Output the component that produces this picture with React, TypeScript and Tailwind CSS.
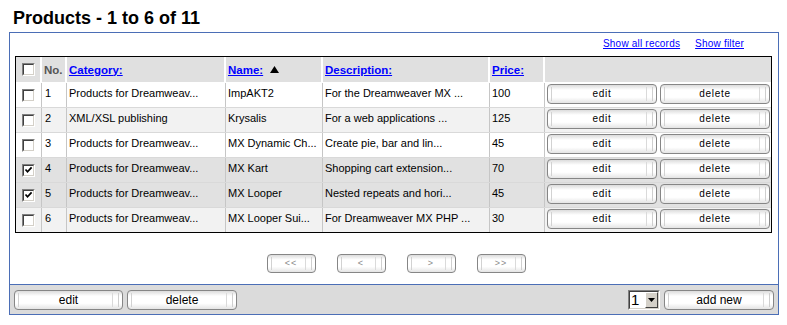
import React from 'react';

type Row = { no: number; cat: string; name: string; desc: string; price: string; checked: boolean };

const rows: Row[] = [
  { no: 1, cat: 'Products for Dreamweav...', name: 'ImpAKT2', desc: 'For the Dreamweaver MX ...', price: '100', checked: false },
  { no: 2, cat: 'XML/XSL publishing', name: 'Krysalis', desc: 'For a web applications ...', price: '125', checked: false },
  { no: 3, cat: 'Products for Dreamweav...', name: 'MX Dynamic Ch...', desc: 'Create pie, bar and lin...', price: '45', checked: false },
  { no: 4, cat: 'Products for Dreamweav...', name: 'MX Kart', desc: 'Shopping cart extension...', price: '70', checked: true },
  { no: 5, cat: 'Products for Dreamweav...', name: 'MX Looper', desc: 'Nested repeats and hori...', price: '45', checked: true },
  { no: 6, cat: 'Products for Dreamweav...', name: 'MX Looper Sui...', desc: 'For Dreamweaver MX PHP ...', price: '30', checked: false },
];

const cols = 'grid grid-cols-[26px_25px_159px_97px_167px_55px_226px]';

// aqua-ish pill button used everywhere on the page
const Btn: React.FC<{ className?: string; children: React.ReactNode }> = ({ className = '', children }) => (
  <button
    className={`relative flex items-center justify-center rounded-[4px] border border-[#868686] bg-[linear-gradient(#dcdcdc,#ffffff_28%,#ffffff_68%,#e4e4e4)] ${className}`}
  >
    <span className="absolute left-[3px] top-[2px] bottom-[2px] w-px bg-[#d2d2d2]" />
    <span className="absolute right-[9px] top-[2px] bottom-[2px] w-px bg-[#dadada]" />
    <span className="absolute right-[3px] top-[2px] bottom-[2px] w-px bg-[#cfcfcf]" />
    <span className="relative">{children}</span>
  </button>
);

const Check: React.FC<{ on?: boolean }> = ({ on }) => (
  <span className="block h-[13px] w-[13px] border border-t-[#808080] border-l-[#808080] border-r-white border-b-white">
    <span className="relative block h-full w-full border border-t-[#404040] border-l-[#404040] border-r-[#d4d0c8] border-b-[#d4d0c8] bg-white">
      {on && (
        <svg className="absolute left-0 top-0" width="9" height="9" viewBox="0 0 9 9">
          <path d="M1.5 3.5 L3.5 5.8 L7.6 1.4" stroke="#000" strokeWidth="1.7" fill="none" />
        </svg>
      )}
    </span>
  </span>
);

export default function App() {
  return (
    <div className="h-[325px] w-[787px] overflow-hidden bg-white font-['Liberation_Sans',Arial,sans-serif] text-black">
      <div className="h-[32px] pl-[13px] pt-[9px] text-[18px] font-bold leading-[18px]">Products - 1 to 6 of 11</div>

      <div className="ml-[9px] w-[770px] border border-[#4b6eb6]">
        <div className="h-[252px] border-b border-[#4b6eb6] bg-white">
          <div className="flex h-[23px] justify-end gap-[15px] pr-[34px] pt-[5px] text-[10px] leading-[12px] tracking-[0.2px] text-[#0000ff]">
            <a className="underline">Show all records</a>
            <a className="underline">Show filter</a>
          </div>

          <div className="ml-[5px] w-[757px] border border-black text-[11px] leading-[14px]">
            <div className={`${cols} h-[26px] border-b border-white bg-[#e0e0e0] text-[11.5px] font-bold`}>
              <div className="flex items-center justify-center border-r-2 border-white">
                <Check />
              </div>
              <div className="flex items-center border-r-2 border-white pl-[2px] text-[#555555]">No.</div>
              <div className="flex items-center border-r-2 border-white pl-[2px] text-[#0000ff] underline">Category:</div>
              <div className="flex items-center gap-[7px] border-r-2 border-white pl-[2px]">
                <span className="text-[#0000ff] underline">Name:</span>
                <svg width="9" height="7" viewBox="0 0 9 7">
                  <path d="M4.5 0 L9 7 L0 7 Z" fill="#000" />
                </svg>
              </div>
              <div className="flex items-center border-r-2 border-white pl-[2px] text-[#0000ff] underline">Description:</div>
              <div className="flex items-center border-r-2 border-white pl-[2px] text-[#0000ff] underline">Price:</div>
              <div />
            </div>

            {rows.map((r, i) => {
              const bg = r.checked ? 'bg-[#e1e1e1]' : i % 2 === 0 ? 'bg-white' : 'bg-[#f2f2f2]';
              const last = i === rows.length - 1;
              return (
                <div key={r.no} className={`${cols} ${bg} ${last ? 'h-[24px]' : 'h-[25px] border-b border-[#d9d9d9]'}`}>
                  <div className="flex items-center justify-center border-r border-[#c6c6c6]">
                    <Check on={r.checked} />
                  </div>
                  <div className="border-r border-[#c6c6c6] pl-[3px] pt-[3px]">{r.no}</div>
                  <div className="border-r border-[#c6c6c6] pl-[2px] pt-[3px] whitespace-nowrap">{r.cat}</div>
                  <div className="border-r border-[#c6c6c6] pl-[2px] pt-[3px] whitespace-nowrap">{r.name}</div>
                  <div className="border-r border-[#c6c6c6] pl-[2px] pt-[3px] whitespace-nowrap">{r.desc}</div>
                  <div className="border-r border-[#c6c6c6] pl-[2px] pt-[3px]">{r.price}</div>
                  <div className="flex gap-[3px] pl-[2px] pt-[1px] text-[10px] tracking-[0.7px]">
                    <Btn className="h-[20px] w-[110px]">edit</Btn>
                    <Btn className="h-[20px] w-[110px]">delete</Btn>
                  </div>
                </div>
              );
            })}
          </div>

          <div className="mt-[21px] flex justify-center gap-[21px] pl-[4px] text-[9px] tracking-[1px] text-[#8a8a8a]">
            <Btn className="h-[19px] w-[49px]">&lt;&lt;</Btn>
            <Btn className="h-[19px] w-[49px]">&lt;</Btn>
            <Btn className="h-[19px] w-[49px]">&gt;</Btn>
            <Btn className="h-[19px] w-[49px]">&gt;&gt;</Btn>
          </div>
        </div>

        <div className="flex h-[29px] items-center justify-between bg-[#dbdbdb] px-[4px] text-[12px]">
          <div className="flex gap-[4px]">
            <Btn className="h-[20px] w-[109px]">edit</Btn>
            <Btn className="h-[20px] w-[110px]">delete</Btn>
          </div>
          <div className="flex items-center gap-[4px]">
            <div className="flex h-[20px] w-[32px] border border-t-[#808080] border-l-[#808080] border-r-white border-b-white">
              <div className="flex flex-1 border border-t-[#404040] border-l-[#404040] border-r-[#d4d0c8] border-b-[#d4d0c8] bg-white">
                <span className="flex-1 pl-[1px] text-[15px] leading-[16px]">1</span>
                <span className="flex w-[13px] items-center justify-center border border-t-white border-l-white border-r-[#404040] border-b-[#404040] bg-[#d4d0c8]">
                  <svg width="7" height="4" viewBox="0 0 7 4">
                    <path d="M0 0 L7 0 L3.5 4 Z" fill="#000" />
                  </svg>
                </span>
              </div>
            </div>
            <Btn className="h-[20px] w-[110px]">add new</Btn>
          </div>
        </div>
      </div>
    </div>
  );
}
